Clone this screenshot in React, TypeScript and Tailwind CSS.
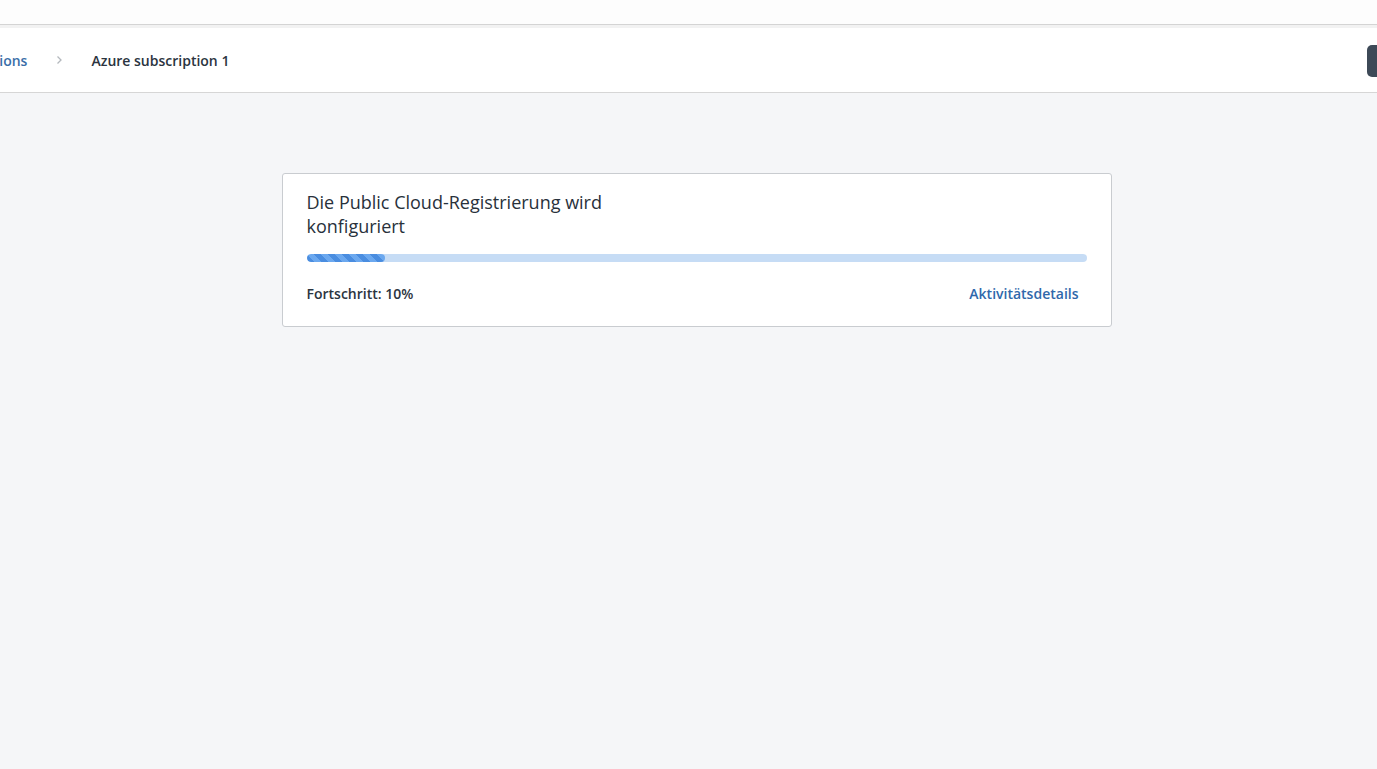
import React from 'react'

export default function App() {
  return (
    <div className="min-h-screen bg-[#f5f6f8] font-['Open_Sans',sans-serif] text-[#28313b]">
      {/* top strip */}
      <div className="h-[24px] bg-[#fdfdfd]" />
      <div className="h-[4px] border-t border-[#d4d4d4] bg-[#f2f2f2]" />

      {/* breadcrumb bar */}
      <div className="flex h-[65px] items-center justify-between overflow-hidden border-b border-[#d6d6d6] bg-white">
        <nav className="-ml-[64px] flex items-center text-[14px] font-semibold">
          <a className="text-[#3a6ea8]">Subscriptions</a>
          <svg className="mx-[26px] h-3 w-3 text-[#b4b8bd]" viewBox="0 0 12 12" fill="none">
            <path d="M4.5 2.5 8 6l-3.5 3.5" stroke="currentColor" strokeWidth="1.3" />
          </svg>
          <span className="text-[#2b3440]">Azure subscription 1</span>
        </nav>
        <div className="mr-[-20px] mt-[2px] h-[32px] w-[30px] rounded-[5px] bg-[#3d4957]" />
      </div>

      {/* progress card */}
      <div className="flex justify-center pt-[80px]">
        <div className="ml-[16px] w-[830px] rounded-[3px] border border-[#c9ccd0] bg-white px-6 pb-[22px] pt-[16px]">
          <h2 className="w-1/2 text-[18px] leading-[24px] text-[#28313b]">
            Die Public Cloud-Registrierung wird konfiguriert
          </h2>
          <div className="mt-[16px] h-[8px] w-full overflow-hidden rounded-full bg-[#c6dcf5]">
            <div
              className="h-full rounded-full bg-[repeating-linear-gradient(45deg,#4a8de0_0px,#4a8de0_5px,#6ba8ef_5px,#6ba8ef_10px)]"
              style={{ width: '10%' }}
            />
          </div>
          <div className="mt-[21px] flex items-center justify-between text-[14px] font-semibold">
            <span className="text-[#2b3440]">Fortschritt: 10%</span>
            <a className="mr-2 text-[#2f68ab]">Aktivitätsdetails</a>
          </div>
        </div>
      </div>
    </div>
  )
}
